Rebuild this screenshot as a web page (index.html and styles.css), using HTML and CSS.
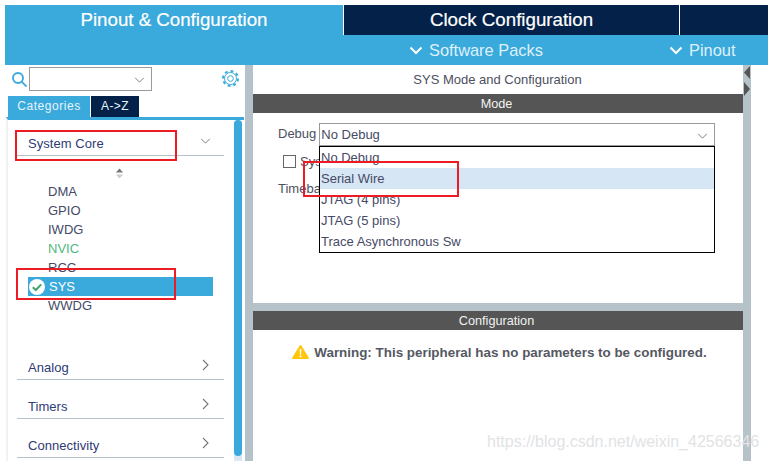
FILE: index.html
```html
<!DOCTYPE html>
<html lang="en">
<head>
<meta charset="utf-8">
<title>SYS Mode and Configuration</title>
<link rel="stylesheet" href="styles.css">
</head>
<body>
<div class="app">
  <header class="head">
    <div class="tabs">
      <div class="tab tab-active">Pinout &amp; Configuration</div>
      <div class="tab tab-clock">Clock Configuration</div>
      <div class="tab tab-rest"></div>
    </div>
    <div class="subbar">
      <div class="sub sub-packs"><svg class="sub-chev" viewBox="0 0 14 9"><path d="M1.5 1.5 7 7l5.5-5.5"/></svg>Software Packs</div>
      <div class="sub sub-pinout"><svg class="sub-chev" viewBox="0 0 14 9"><path d="M1.5 1.5 7 7l5.5-5.5"/></svg>Pinout</div>
    </div>
  </header>
  <div class="main">
    <aside class="left">
      <div class="search">
        <svg class="search-ico" viewBox="0 0 15 15"><circle cx="6" cy="6" r="5"/><path d="M9.600 9.600 14.500 14.500"/></svg>
        <div class="combo"><svg class="chev" viewBox="0 0 12 7"><path d="M1 1l5 5 5-5"/></svg></div>
        <svg class="gear" viewBox="0 0 24 24"><circle class="gear-teeth" cx="12" cy="12" r="10.500" pathLength="24"/><circle cx="12" cy="12" r="8.500"/><circle cx="12" cy="12" r="4"/></svg>
      </div>
      <div class="cat-tabs">
        <div class="cat cat-on">Categories</div>
        <div class="cat cat-off">A-&gt;Z</div>
      </div>
      <div class="tree">
        <div class="tree-body">
          <div class="group group-open">System Core<svg class="chev-lg" viewBox="0 0 12 7"><path d="M1 1l5 5 5-5"/></svg></div>
          <svg class="sort" viewBox="0 0 10 11"><path class="sort-up" d="M5 0l4 4.500H1z"/><path class="sort-down" d="M5 11 1 6.500h8z"/></svg>
          <ul class="items">
            <li class="item">DMA</li>
            <li class="item">GPIO</li>
            <li class="item">IWDG</li>
            <li class="item item-green">NVIC</li>
            <li class="item">RCC</li>
            <li class="item item-sel"><svg class="ok" viewBox="0 0 16 16"><circle cx="8" cy="8" r="8"/><path d="M3.800 8.200 6.800 11l5.400-5.600"/></svg>SYS</li>
            <li class="item">WWDG</li>
          </ul>
          <div class="group group-analog">Analog<svg class="chev-r" viewBox="0 0 7 12"><path d="M1 1l5 5-5 5"/></svg></div>
          <div class="group">Timers<svg class="chev-r" viewBox="0 0 7 12"><path d="M1 1l5 5-5 5"/></svg></div>
          <div class="group">Connectivity<svg class="chev-r" viewBox="0 0 7 12"><path d="M1 1l5 5-5 5"/></svg></div>
        </div>
        <div class="scroll"><div class="thumb"></div></div>
      </div>
    </aside>
    <section class="right">
      <div class="mode-panel">
        <div class="title">SYS Mode and Configuration</div>
        <div class="bar">Mode</div>
        <div class="form">
          <div class="row-debug">
            <span class="lbl">Debug</span>
            <div class="select">No Debug<svg class="chev" viewBox="0 0 12 7"><path d="M1 1l5 5 5-5"/></svg></div>
          </div>
          <div class="row-sys"><span class="check"></span><span class="lbl">Sys</span></div>
          <div class="row-time"><span class="lbl">Timebase</span></div>
        </div>
      </div>
      <div class="config-panel">
        <div class="bar">Configuration</div>
        <div class="warn">
          <svg class="warn-ico" viewBox="0 0 17 14"><path class="warn-tri" d="M8.500 0c.5 0 .8.300 1 .7l7.200 11.700c.4.700 0 1.600-.9 1.600H1.200c-.9 0-1.300-.9-.9-1.600L7.500.7c.2-.4.500-.7 1-.7z"/><path class="warn-mark" d="M7.600 4h1.800l-.3 5.500H7.900zM7.600 10.500h1.800V12.200H7.600z"/></svg>
          Warning: This peripheral has no parameters to be configured.
        </div>
      </div>
      <div class="menu">
        <div class="opt">No Debug</div>
        <div class="opt opt-on">Serial Wire</div>
        <div class="opt">JTAG (4 pins)</div>
        <div class="opt">JTAG (5 pins)</div>
        <div class="opt">Trace Asynchronous Sw</div>
      </div>
    </section>
    <div class="edge">
      <svg class="handle" viewBox="0 0 8 30"><path d="M7 0v13L1 6.500zM1 16v14l6-7z"/></svg>
    </div>
  </div>
</div>
<div class="mark mark-core"></div>
<div class="mark mark-sys"></div>
<div class="mark mark-wire"></div>
<div class="watermark">https://blog.csdn.net/weixin_42566346</div>
</body>
</html>
```

FILE: styles.css
```css
* { box-sizing: border-box; }
html, body { margin: 0; padding: 0; height: 100%; overflow: hidden; background: #fff; }
body { position: relative; font-family: "Liberation Sans", Arial, sans-serif; color: #454a66; }
.app { padding: 5px 0 0 5px; height: 461px; display: flex; flex-direction: column; }

.head { flex: none; }
.tabs { display: flex; height: 30px; background: #032149; }
.tab { color: #fff; font-size: 18.700px; line-height: 30px; text-align: center; -webkit-text-stroke: .2px #fff; }
.tab-active { width: 338px; background: #3aa9dc; }
.tab-clock { width: 336px; border-left: 1px solid #fff; }
.tab-rest { flex: 1; border-left: 1px solid #fff; }
.subbar { height: 30px; background: #3aa9dc; display: flex; color: #dff1fa; font-size: 16.400px; line-height: 30px; }
.sub { display: flex; align-items: center; white-space: nowrap; }
.sub-packs { margin-left: 404px; width: 260px; }
.sub-chev { width: 14px; height: 9px; margin-right: 6px; fill: none; stroke: #fff; stroke-width: 2; }

.main { flex: 1; min-height: 0; display: flex; }
.left { width: 240px; flex: none; display: flex; flex-direction: column; }
.search { height: 31px; display: flex; align-items: flex-start; padding-top: 2px; }
.search-ico { width: 15px; height: 15px; margin: 5px 2px 0 7px; fill: none; stroke: #3aa9dc; stroke-width: 1.900; }
.combo { width: 123px; height: 24px; border: 1px solid #9a9a9a; position: relative; }
.chev { position: absolute; right: 6px; top: 9px; width: 11px; height: 6px; fill: none; stroke: #777; stroke-width: 1.100; }
.gear { width: 17px; height: 17px; margin: 3px 0 0 70px; fill: none; stroke: #3aa9dc; stroke-width: 1.400; }
.gear-teeth { stroke-width: 3; stroke-dasharray: 1.500 1.500; }
.cat-tabs { display: flex; height: 21px; padding-left: 3px; gap: 1px; font-size: 12px; line-height: 21px; letter-spacing: .55px; }
.cat { text-align: center; color: #e6f4fb; }
.cat-on { width: 82px; background: #3aa9dc; }
.cat-off { width: 48px; background: #032149; letter-spacing: .4px; }
.tree { flex: 1; min-height: 0; border-top: 3px solid #3aa9dc; margin-left: 1px; margin-right: 1px; border-left: 2px solid #f1f2f3; display: flex; }
.tree-body { width: 226px; padding-left: 9px; }
.group { width: 207px; height: 39px; border-bottom: 1px solid #b6c2c9; padding: 18px 0 0 11px; line-height: 17px; color: #2f3a76; position: relative; font-size: 13px; letter-spacing: .05px; }
.group-open { height: 36px; padding-top: 15px; }
.group-analog { margin-top: 26px; }
.chev-lg { position: absolute; right: 13px; top: 18px; width: 11px; height: 6px; fill: none; stroke: #777; stroke-width: 1.100; }
.chev-r { position: absolute; right: 15px; top: 18px; width: 7px; height: 12px; fill: none; stroke: #777; stroke-width: 1.100; }
.sort { display: block; width: 9px; height: 11px; margin: 12px 0 0 98px; }
.sort-up { fill: #777; }
.sort-down { fill: #ccc; }
.items { list-style: none; margin: 3px 0 0; padding: 0; }
.item { height: 19px; line-height: 19px; font-size: 13px; padding-left: 31px; color: #454a66; width: 196px; display: flex; align-items: center; }
.item-green { color: #4fb97f; }
.item-sel { background: #3aa9dc; color: #fff; margin-left: 11px; width: 185px; padding-left: 1px; }
.ok { width: 16px; height: 16px; margin-right: 4px; flex: none; fill: #fff; }
.ok path { fill: none; stroke: #3fa56b; stroke-width: 2; }
.scroll { width: 8px; flex: none; background: #d8e9f5; border-radius: 4px 4px 0 0; }
.thumb { height: 336px; background: #3aa9dc; border-radius: 4px; }

.right { width: 498px; flex: none; border-left: 8px solid #b6c2c9; position: relative; display: flex; flex-direction: column; background: #b6c2c9; }
.mode-panel { height: 238px; background: #fff; }
.title { height: 29px; text-align: center; line-height: 30px; font-size: 13px; color: #4c5060; padding-right: 1px; }
.bar { height: 19px; line-height: 20px; background: #545554; color: #f2f2f2; text-align: center; font-size: 12.700px; padding-right: 3px; }
.form { position: relative; font-size: 13px; }
.row-debug { display: flex; padding: 10px 0 0 25px; }
.lbl { color: #4c5060; line-height: 22px; }
.select { width: 396px; height: 23px; margin-left: 3px; border: 1px solid #9a9a9a; padding-left: 1px; line-height: 21px; position: relative; color: #454a66; }
.row-sys { display: flex; align-items: center; padding: 0 0 0 30px; height: 33px; margin-top: -1px; }
.check { width: 13px; height: 13px; border: 1px solid #666; margin-right: 4px; }
.row-time { padding-left: 25px; line-height: 22px; height: 22px; }
.config-panel { flex: 1; background: #fff; margin-top: 8px; }
.warn { display: flex; align-items: center; justify-content: center; font-weight: bold; font-size: 13.400px; margin-top: 14px; gap: 5px; height: 17px; color: #555862; white-space: nowrap; padding-left: 3px; }
.warn-ico { width: 17px; height: 14px; margin-top: -2px; }
.warn-tri { fill: #ffc60a; }
.warn-mark { fill: #fff; }
.menu { position: absolute; left: 66px; top: 81px; width: 396px; height: 107px; background: #fff; border: 1px solid #000; font-size: 13px; }
.opt { height: 21px; line-height: 21px; padding-left: 1px; color: #454a66; }
.opt-on { background: #d7e6f4; }
.edge { width: 8px; flex: none; background: #b6c2c9; position: relative; }
.handle { display: block; width: 8px; height: 30px; fill: #545554; margin-top: 1px; }

.mark { position: absolute; border: 2px solid #ed1c24; }
.mark-core { left: 15px; top: 130px; width: 162px; height: 31px; }
.mark-sys { left: 16px; top: 268px; width: 160px; height: 32px; }
.mark-wire { left: 303px; top: 161px; width: 156px; height: 36px; }
.watermark { position: absolute; left: 487px; top: 433px; font-size: 16px; color: #e1e3e5; white-space: nowrap; }
```
